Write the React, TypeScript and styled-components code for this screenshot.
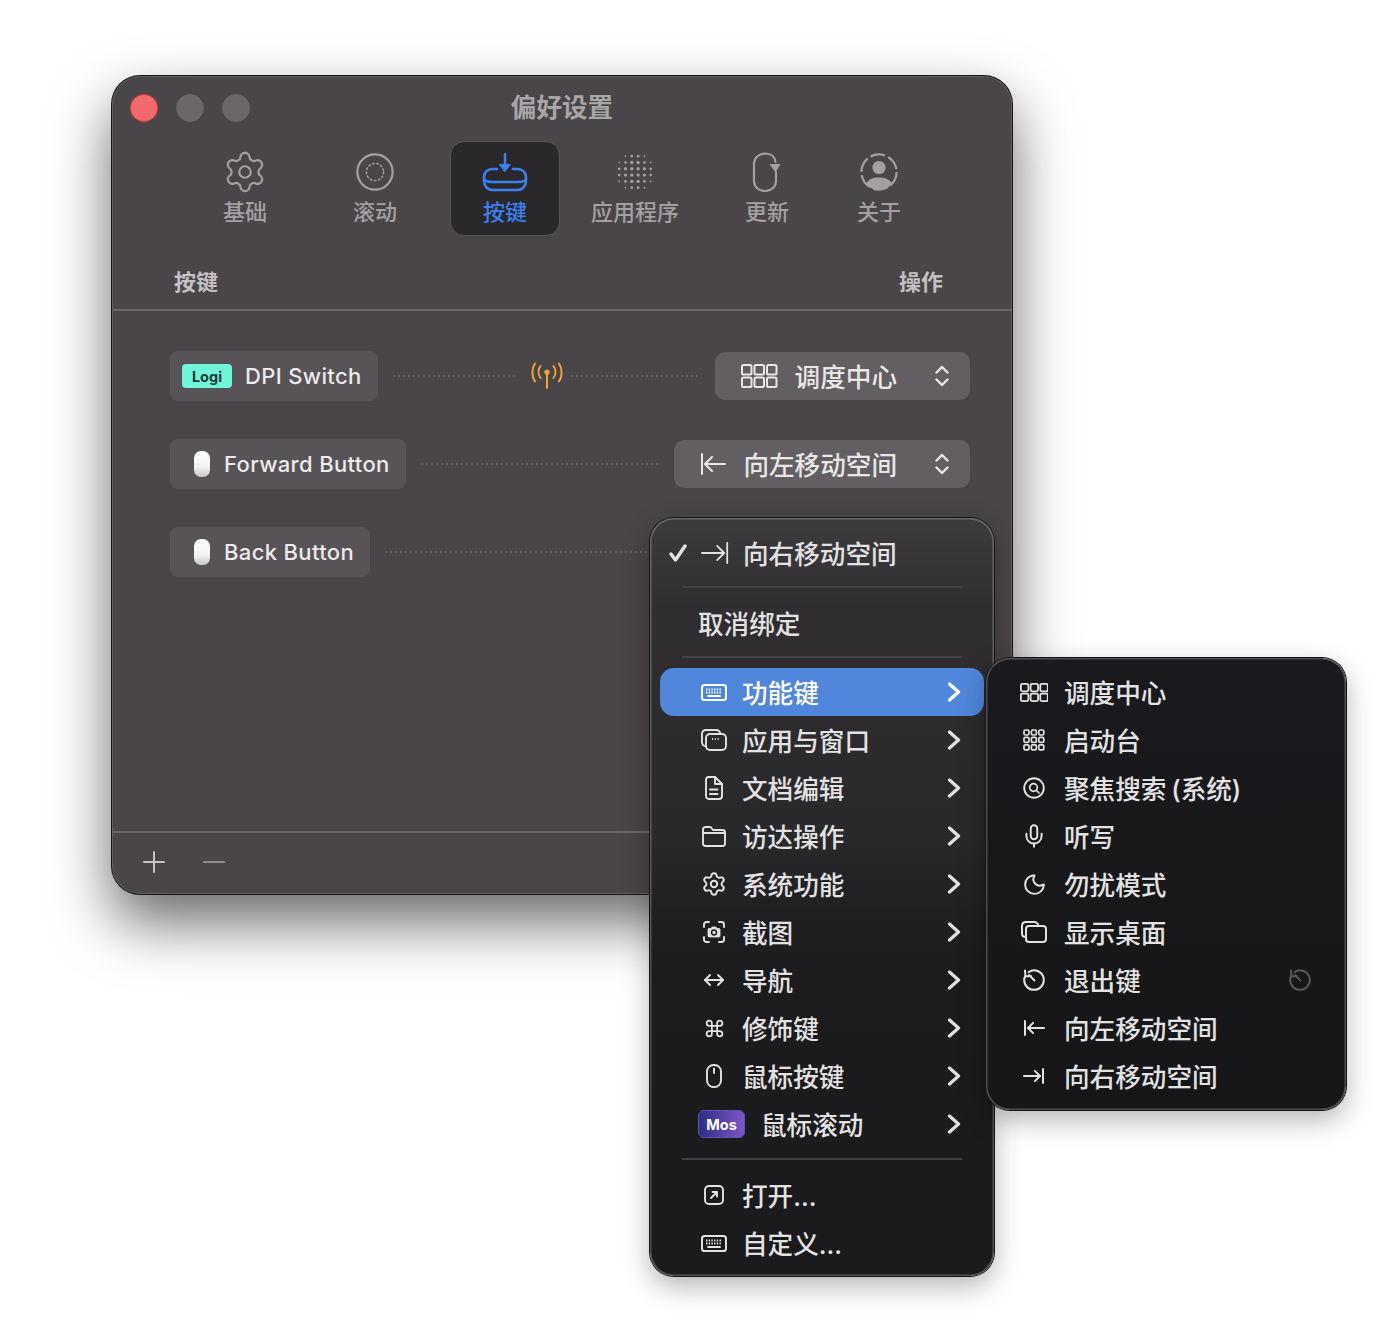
import React from 'react'
import styled, { createGlobalStyle } from 'styled-components'
import { Settings, Command, Mic, Moon } from 'lucide-react'

const GlobalStyle = createGlobalStyle`
  html, body {
    margin: 0;
    background: #fff;
  }
  body {
    font-family: "Inter", "Noto Sans CJK SC", sans-serif;
  }
`

const Stage = styled.div`
  position: relative;
  width: 1392px;
  height: 1330px;
  padding: 76px 0 0 112px;
  box-sizing: border-box;
  overflow: hidden;
`

const Window = styled.div`
  width: 900px;
  height: 818px;
  display: flex;
  flex-direction: column;
  border-radius: 28px;
  background: #4a4548;
  box-shadow: inset 0 0 0 1px rgba(255, 255, 255, 0.14), 0 0 0 1px #161616, 0 28px 60px rgba(0, 0, 0, 0.6);
`

const TitleBar = styled.div`
  display: grid;
  grid-template-columns: 1fr auto 1fr;
  align-items: center;
  padding: 18px 18px 0;
  height: 28px;
`

const Lights = styled.div`
  display: flex;
  gap: 18px;
`

const Light = styled.span<{ $red?: boolean }>`
  width: 28px;
  height: 28px;
  border-radius: 50%;
  box-sizing: border-box;
  background: ${({ $red }) => ($red ? '#f26a6c' : '#6b6669')};
  border: 1px solid ${({ $red }) => ($red ? '#e8403f' : '#6b6669')};
`

const Title = styled.div`
  font-size: 25.6px;
  font-weight: 700;
  line-height: 28px;
  color: #a8a5a7;
`

const Toolbar = styled.div`
  display: flex;
  gap: 20px;
  padding-left: 78px;
  margin-top: 19px;
`

const Tab = styled.div<{ $w: number; $active?: boolean }>`
  width: ${({ $w }) => $w}px;
  height: 95px;
  box-sizing: border-box;
  padding-top: 10px;
  display: flex;
  flex-direction: column;
  align-items: center;
  border-radius: 14px;
  font-size: 22px;
  font-weight: 500;
  line-height: 30px;
  color: ${({ $active }) => ($active ? '#3a80f0' : '#a3a0a2')};
  background: ${({ $active }) => ($active ? '#2b282b' : 'transparent')};
  border: 1px solid ${({ $active }) => ($active ? '#5a5659' : 'transparent')};
`

const TabIcon = styled.div`
  height: 40px;
  margin-bottom: 5px;
  display: flex;
  align-items: center;
  justify-content: center;
`

const HeaderRow = styled.div`
  display: flex;
  justify-content: space-between;
  margin-top: 30px;
  padding: 0 69px 11px 62px;
  font-size: 22px;
  font-weight: 600;
  line-height: 32px;
  color: #c2c0c1;
  border-bottom: 2px solid #6a6668;
`

const Rows = styled.div`
  display: flex;
  flex-direction: column;
  gap: 38px;
  padding: 40px 42px 0 58px;
`

const Row = styled.div`
  display: flex;
  align-items: center;
  height: 50px;
`

const Chip = styled.div`
  height: 50px;
  display: flex;
  align-items: center;
  gap: 13px;
  padding: 0 16px 0 12px;
  box-sizing: border-box;
  border-radius: 8px;
  background: #575356;
  font-size: 22px;
  font-weight: 500;
  letter-spacing: 0.35px;
  color: #eceaeb;
`

const LogiBadge = styled.span`
  width: 50px;
  height: 24px;
  display: flex;
  align-items: center;
  justify-content: center;
  border-radius: 4px;
  background: #6ff5d8;
  font-size: 14.5px;
  font-weight: 700;
  letter-spacing: 0;
  color: #1e3a34;
`

const MousePill = styled.span`
  width: 16px;
  height: 26px;
  margin: 0 1px 0 12px;
  border-radius: 7px;
  background: linear-gradient(180deg, #ffffff 0%, #f3f3f3 60%, #c9c9c9 100%);
`

const Dots = styled.div<{ $w?: number }>`
  flex: ${({ $w }) => ($w ? `0 0 ${$w}px` : '1')};
  height: 2px;
  margin: 0 15px;
  background: repeating-linear-gradient(90deg, #635f62 0 2px, transparent 2px 5px);
`

const Select = styled.div`
  height: 48px;
  margin-left: auto;
  display: flex;
  align-items: center;
  gap: 17px;
  padding: 0 21px 0 26px;
  box-sizing: border-box;
  border-radius: 10px;
  background: #625e61;
  font-size: 25.6px;
  font-weight: 500;
  color: #e8e6e7;
`

const SelectArrows = styled.span`
  display: flex;
  margin-left: 21px;
`

const Footer = styled.div`
  margin-top: auto;
  height: 63px;
  box-sizing: border-box;
  padding: 0 0 3px 31px;
  display: flex;
  align-items: center;
  gap: 38px;
  border-top: 2px solid #6a6668;
`

const Menu = styled.div`
  position: absolute;
  left: 650px;
  top: 518px;
  width: 344px;
  height: 758px;
  box-sizing: border-box;
  padding-top: 11px;
  border-radius: 24px;
  background: linear-gradient(180deg, #3d3b3d 0%, #302e31 12%, #29282b 42%, #201f21 52%, #1c1b1d 60%, #1b1a1c 100%);
  box-shadow: inset 0 0 0 1.5px rgba(255, 255, 255, 0.24), 0 0 0 1px #141414, 0 10px 28px rgba(0, 0, 0, 0.3);
`

const SubMenu = styled(Menu)`
  left: 986px;
  top: 658px;
  width: 360px;
  height: 452px;
  padding-top: 10px;
  background: linear-gradient(180deg, #1a1a1e 0%, #161618 100%);
`

const Item = styled.div<{ $selected?: boolean }>`
  height: 48px;
  margin: 0 10px;
  display: flex;
  align-items: center;
  gap: 12px;
  padding: 0 23px 0 38px;
  border-radius: 14px;
  font-size: 25.6px;
  font-weight: 500;
  color: ${({ $selected }) => ($selected ? '#ffffff' : '#e3e2e3')};
  background: ${({ $selected }) => ($selected ? '#5087dd' : 'transparent')};
`

const SubItem = styled.div`
  height: 48px;
  display: flex;
  align-items: center;
  gap: 14px;
  padding: 0 30px 0 32px;
  font-size: 25.6px;
  font-weight: 500;
  word-spacing: -2px;
  color: #e3e2e3;
`

// the CJK face sits low in its line box, lift it to the icons' centre line
const Label = styled.span`
  margin-bottom: 2px;
`

const IconBox = styled.span`
  width: 32px;
  height: 32px;
  flex: none;
  display: flex;
  align-items: center;
  justify-content: center;
`

const Check = styled.span`
  width: 18px;
  height: 18px;
  margin-left: -29px;
  display: flex;
`

const MenuChevron = styled.span`
  margin-left: auto;
  display: flex;
`

const Faded = styled(IconBox)`
  margin-left: auto;
  color: #57565a;
`

const MosBadge = styled.span`
  width: 47px;
  height: 28px;
  flex: none;
  margin-right: 4px;
  display: flex;
  align-items: center;
  justify-content: center;
  box-sizing: border-box;
  border-radius: 6px;
  border: 1px solid #5a57b8;
  background: linear-gradient(90deg, #2b2f85 0%, #7f55c9 100%);
  font-size: 14.5px;
  font-weight: 700;
  color: #fff;
`

const Separator = styled.div<{ $before?: number; $after?: number }>`
  height: 2px;
  margin: ${({ $before }) => $before ?? 9}px 32px ${({ $after }) => $after ?? 10}px;
  background: #434144;
`

const PlusMark = styled.span`
  display: flex;
  color: #c6c4c5;
`

const MinusMark = styled.span`
  display: flex;
  color: #8e8b8d;
`

const AntennaWrap = styled.span`
  display: flex;
  color: #eea438;
  margin: 0 -7px 0 1px;
`

type GlyphProps = { w: number; h: number; sw?: number; children: React.ReactNode }

const Glyph = ({ w, h, sw = 2, children }: GlyphProps) => (
  <svg width={w} height={h} viewBox={`0 0 ${w} ${h}`} fill="none" stroke="currentColor" strokeWidth={sw} strokeLinecap="round" strokeLinejoin="round">
    {children}
  </svg>
)

const ScrollIcon = () => (
  <Glyph w={40} h={40} sw={2.2}>
    <circle cx={20} cy={20} r={17.6} />
    <circle cx={20} cy={20} r={8.6} strokeWidth={1.5} strokeDasharray="1.6 2.6" />
  </Glyph>
)

const ButtonsIcon = () => (
  <Glyph w={46} h={40} sw={2.6}>
    <path d="M15 17H10C5.500 17 2 20.500 2 25V29C2 33.500 5.500 38 10 38H36C40.500 38 44 33.500 44 29V25C44 20.500 40.500 17 36 17H31" />
    <path d="M2 26C2 28.500 5.500 30 10 30H36C40.500 30 44 28.500 44 26" />
    <path d="M23 2V14" />
    <path d="M17.500 12.500H28.500L23 19.500Z" fill="currentColor" strokeWidth={1} />
  </Glyph>
)

const AppsIcon = () => {
  const cells = [0, 1, 2, 3, 4, 5]
  return (
    <svg width={40} height={40} viewBox="0 0 40 40" fill="currentColor">
      {cells.flatMap(r =>
        cells.map(c => {
          const d = Math.hypot(r - 2.5, c - 2.5)
          if (d > 3.4) return null
          return <circle key={`${r}-${c}`} cx={4.2 + c * 6.3} cy={4.2 + r * 6.3} r={d < 1.6 ? 1.7 : d < 2.6 ? 1.35 : 0.85} />
        })
      )}
    </svg>
  )
}

const UpdateIcon = () => (
  <Glyph w={30} h={40} sw={2.2}>
    <path d="M23.500 10C23 5 19 1.500 13 1.500C7 1.500 2 6 2 12V29C2 35 7 39 13 39C19 39 24 35 24 29V20" />
    <path d="M17.500 12H28.500L23.500 20.500Z" fill="currentColor" stroke="none" />
  </Glyph>
)

const AboutIcon = () => (
  <Glyph w={40} h={40} sw={2.2}>
    <circle cx={20} cy={20} r={17.6} strokeDasharray="14.9 3.5" strokeLinecap="butt" />
    <circle cx={20} cy={15.500} r={6.600} fill="currentColor" stroke="none" />
    <path d="M7 32C9 27 14 25.500 20 25.500C26 25.500 31 27 33 32C29.500 36 25 38 20 38C15 38 10.500 36 7 32Z" fill="currentColor" stroke="none" />
  </Glyph>
)

const AntennaIcon = () => (
  <Glyph w={32} h={30} sw={2}>
    <path d="M16 11V27" />
    <circle cx={16} cy={11} r={1.6} fill="currentColor" />
    <path d="M9.500 5C7 8.500 7 13.500 9.500 17" />
    <path d="M22.500 5C25 8.500 25 13.500 22.500 17" />
    <path d="M4 2.500C0.500 7.500 0.500 15.500 4 20.500" />
    <path d="M28 2.500C31.500 7.500 31.500 15.500 28 20.500" />
  </Glyph>
)

const MissionGrid = ({ cell, gap, sw }: { cell: number; gap: number; sw: number }) => {
  const w = cell * 3 + gap * 2 + sw
  const h = cell * 2 + gap + sw
  return (
    <Glyph w={w} h={h} sw={sw}>
      {[0, 1].flatMap(r =>
        [0, 1, 2].map(c => (
          <rect key={`${r}${c}`} x={sw / 2 + c * (cell + gap)} y={sw / 2 + r * (cell + gap)} width={cell} height={cell} rx={1.6} />
        ))
      )}
    </Glyph>
  )
}

const LaunchGrid = () => (
  <Glyph w={22} h={22} sw={1.7}>
    {[0, 1, 2].flatMap(r =>
      [0, 1, 2].map(c => <rect key={`${r}${c}`} x={1 + c * 7.400} y={1 + r * 7.400} width={5} height={5} rx={1.4} />)
    )}
  </Glyph>
)

const ArrowLeftBar = ({ w, h, sw }: { w: number; h: number; sw: number }) => {
  const head = h * 0.32
  return (
    <Glyph w={w} h={h} sw={sw}>
      <path d={`M${sw} 1V${h - 1}`} />
      <path d={`M${w - 1} ${h / 2}H${sw + 3}`} />
      <path d={`M${sw + 3 + head} ${h / 2 - head}L${sw + 3} ${h / 2}L${sw + 3 + head} ${h / 2 + head}`} />
    </Glyph>
  )
}

const ArrowRightBar = ({ w, h, sw }: { w: number; h: number; sw: number }) => {
  const head = h * 0.32
  const tip = w - sw - 3
  return (
    <Glyph w={w} h={h} sw={sw}>
      <path d={`M${w - sw} 1V${h - 1}`} />
      <path d={`M1 ${h / 2}H${tip}`} />
      <path d={`M${tip - head} ${h / 2 - head}L${tip} ${h / 2}L${tip - head} ${h / 2 + head}`} />
    </Glyph>
  )
}

const UpDown = () => (
  <Glyph w={14} h={22} sw={2.4}>
    <path d="M1.500 7.500L7 2L12.500 7.500" />
    <path d="M1.500 14.500L7 20L12.500 14.500" />
  </Glyph>
)

const Chevron = () => (
  <Glyph w={14} h={20} sw={3.200}>
    <path d="M2.500 2L11.500 10L2.500 18" />
  </Glyph>
)

const KeyboardIcon = () => (
  <Glyph w={26} h={17} sw={2}>
    <rect x={1} y={1} width={24} height={15} rx={2.600} />
    <path d="M5 5.500H21M5 8.500H21" strokeWidth={2} strokeDasharray="1.400 1.300" strokeLinecap="butt" />
    <path d="M7 12H19" strokeWidth={1.8} />
  </Glyph>
)

const WindowsIcon = () => (
  <Glyph w={26} h={22} sw={1.9}>
    <path d="M5 17C2.500 17 1 15.500 1 13.500V5C1 2.500 2.500 1 5 1H15C17.500 1 19 2.500 19.500 5" />
    <rect x={5} y={5} width={20} height={16} rx={4} />
    <path d="M11 10H19" strokeDasharray="1 1.800" strokeLinecap="butt" />
  </Glyph>
)

const DocIcon = () => (
  <Glyph w={18} h={24} sw={1.9}>
    <path d="M3.500 1H10L17 8V20C17 21.800 15.800 23 14 23H4C2.200 23 1 21.800 1 20V4C1 2.200 2 1 3.500 1Z" />
    <path d="M10 1V8H17" />
    <path d="M5 13.500H12.500M5 18H12.500" />
  </Glyph>
)

const FolderIcon = () => (
  <Glyph w={24} h={21} sw={1.9}>
    <path d="M3.500 1H8.500L11 4H20.500C22 4 23 5 23 6.500V17.500C23 19 22 20 20.500 20H3.500C2 20 1 19 1 17.500V3.500C1 2 2 1 3.500 1Z" />
    <path d="M1 7H23" />
  </Glyph>
)

const ScreenshotIcon = () => (
  <Glyph w={22} h={22} sw={1.9}>
    <path d="M1 6V3.500C1 2 2 1 3.500 1H6M16 1H18.500C20 1 21 2 21 3.500V6M21 16V18.500C21 20 20 21 18.500 21H16M6 21H3.500C2 21 1 20 1 18.500V16" />
    <path d="M6 7.500H8L9 6H13L14 7.500H16C16.600 7.500 17 8 17 8.500V15C17 15.600 16.600 16 16 16H6C5.400 16 5 15.600 5 15V8.500C5 8 5.400 7.500 6 7.500Z" fill="currentColor" strokeWidth={0.8} />
    <circle cx={11} cy={11.500} r={2.400} stroke="#1f1e20" strokeWidth={1.500} />
  </Glyph>
)

const NavIcon = () => (
  <Glyph w={22} h={14} sw={2}>
    <path d="M2 7H20" />
    <path d="M7 2L2 7L7 12M15 2L20 7L15 12" />
  </Glyph>
)

const MouseIcon = () => (
  <Glyph w={16} h={24} sw={1.9}>
    <rect x={1} y={1} width={14} height={22} rx={6.500} />
    <path d="M8 4.500V9" />
  </Glyph>
)

const OpenIcon = () => (
  <Glyph w={20} h={20} sw={1.9}>
    <rect x={1} y={1} width={18} height={18} rx={4} />
    <path d="M7 13L13 7M8.500 7H13V11.500" />
  </Glyph>
)

const SpotlightIcon = () => (
  <Glyph w={22} h={22} sw={1.9}>
    <circle cx={11} cy={11} r={9.800} />
    <circle cx={10.500} cy={10.500} r={3.800} strokeWidth={1.700} />
    <path d="M13.500 13.500L16 16" strokeWidth={1.700} />
  </Glyph>
)

const DesktopIcon = () => (
  <Glyph w={26} h={22} sw={2}>
    <path d="M5 16C2.500 16 1 14.500 1 12.500V5C1 2.500 2.500 1 5 1H13C15.500 1 17 2.500 17.500 5" />
    <rect x={5} y={5} width={20} height={16} rx={3} />
  </Glyph>
)

const EscapeIcon = () => (
  <Glyph w={24} h={24} sw={2}>
    <path d="M6.500 4.200C8.500 2.800 10.200 2.200 12 2.200C17.400 2.200 21.800 6.600 21.800 12C21.800 17.400 17.400 21.800 12 21.800C6.600 21.800 2.200 17.400 2.200 12C2.200 10.500 2.500 9.200 3.200 8" />
    <path d="M3 2.500L3.500 8.500L9 8" />
    <path d="M7 7L12.500 12.500" />
  </Glyph>
)

const CheckMark = () => (
  <Glyph w={18} h={18} sw={3.400}>
    <path d="M2 10L6.500 16L16 2" />
  </Glyph>
)

const menuItems: { icon: React.ReactNode; label: string }[] = [
  { icon: <WindowsIcon />, label: '应用与窗口' },
  { icon: <DocIcon />, label: '文档编辑' },
  { icon: <FolderIcon />, label: '访达操作' },
  { icon: <Settings size={26} strokeWidth={1.800} />, label: '系统功能' },
  { icon: <ScreenshotIcon />, label: '截图' },
  { icon: <NavIcon />, label: '导航' },
  { icon: <Command size={21} strokeWidth={2} />, label: '修饰键' },
  { icon: <MouseIcon />, label: '鼠标按键' }
]

const subItems: { icon: React.ReactNode; label: string; faded?: boolean }[] = [
  { icon: <MissionGrid cell={7.500} gap={2.200} sw={1.800} />, label: '调度中心' },
  { icon: <LaunchGrid />, label: '启动台' },
  { icon: <SpotlightIcon />, label: '聚焦搜索 (系统)' },
  { icon: <Mic size={26} strokeWidth={1.800} />, label: '听写' },
  { icon: <Moon size={25} strokeWidth={1.900} />, label: '勿扰模式' },
  { icon: <DesktopIcon />, label: '显示桌面' },
  { icon: <EscapeIcon />, label: '退出键', faded: true },
  { icon: <ArrowLeftBar w={22} h={16} sw={2} />, label: '向左移动空间' },
  { icon: <ArrowRightBar w={22} h={16} sw={2} />, label: '向右移动空间' }
]

export default function App () {
  return (
    <Stage>
      <GlobalStyle />
      <Window>
        <TitleBar>
          <Lights>
            <Light $red />
            <Light />
            <Light />
          </Lights>
          <Title>偏好设置</Title>
        </TitleBar>
        <Toolbar>
          <Tab $w={110}><TabIcon><Settings size={46} strokeWidth={1.150} /></TabIcon>基础</Tab>
          <Tab $w={110}><TabIcon><ScrollIcon /></TabIcon>滚动</Tab>
          <Tab $w={110} $active><TabIcon><ButtonsIcon /></TabIcon>按键</Tab>
          <Tab $w={110}><TabIcon><AppsIcon /></TabIcon>应用程序</Tab>
          <Tab $w={114}><TabIcon><UpdateIcon /></TabIcon>更新</Tab>
          <Tab $w={70}><TabIcon><AboutIcon /></TabIcon>关于</Tab>
        </Toolbar>
        <HeaderRow>
          <span>按键</span>
          <span>操作</span>
        </HeaderRow>
        <Rows>
          <Row>
            <Chip><LogiBadge>Logi</LogiBadge>DPI Switch</Chip>
            <Dots $w={122} />
            <AntennaWrap><AntennaIcon /></AntennaWrap>
            <Dots $w={126} />
            <Select>
              <MissionGrid cell={9.500} gap={3} sw={2} />
              <Label>调度中心</Label>
              <SelectArrows><UpDown /></SelectArrows>
            </Select>
          </Row>
          <Row>
            <Chip><MousePill />Forward Button</Chip>
            <Dots />
            <Select>
              <ArrowLeftBar w={26} h={22} sw={2} />
              <Label>向左移动空间</Label>
              <SelectArrows><UpDown /></SelectArrows>
            </Select>
          </Row>
          <Row>
            <Chip><MousePill />Back Button</Chip>
            <Dots />
          </Row>
        </Rows>
        <Footer>
          <PlusMark>
            <Glyph w={22} h={22} sw={2}><path d="M11 1V21M1 11H21" /></Glyph>
          </PlusMark>
          <MinusMark>
            <Glyph w={22} h={22} sw={2.200}><path d="M1 11H21" /></Glyph>
          </MinusMark>
        </Footer>
      </Window>

      <Menu>
        <Item>
          <Check><CheckMark /></Check>
          <IconBox><ArrowRightBar w={28} h={22} sw={1.800} /></IconBox>
          <Label>向右移动空间</Label>
        </Item>
        <Separator $after={11} />
        <Item><Label>取消绑定</Label></Item>
        <Separator />
        <Item $selected>
          <IconBox><KeyboardIcon /></IconBox>
          <Label>功能键</Label>
          <MenuChevron><Chevron /></MenuChevron>
        </Item>
        {menuItems.map(item => (
          <Item key={item.label}>
            <IconBox>{item.icon}</IconBox>
            <Label>{item.label}</Label>
            <MenuChevron><Chevron /></MenuChevron>
          </Item>
        ))}
        <Item>
          <MosBadge>Mos</MosBadge>
          <Label>鼠标滚动</Label>
          <MenuChevron><Chevron /></MenuChevron>
        </Item>
        <Separator $before={10} $after={11} />
        <Item>
          <IconBox><OpenIcon /></IconBox>
          <Label>打开...</Label>
        </Item>
        <Item>
          <IconBox><KeyboardIcon /></IconBox>
          <Label>自定义...</Label>
        </Item>
      </Menu>

      <SubMenu>
        {subItems.map(item => (
          <SubItem key={item.label}>
            <IconBox>{item.icon}</IconBox>
            <Label>{item.label}</Label>
            {item.faded && <Faded><EscapeIcon /></Faded>}
          </SubItem>
        ))}
      </SubMenu>
    </Stage>
  )
}
